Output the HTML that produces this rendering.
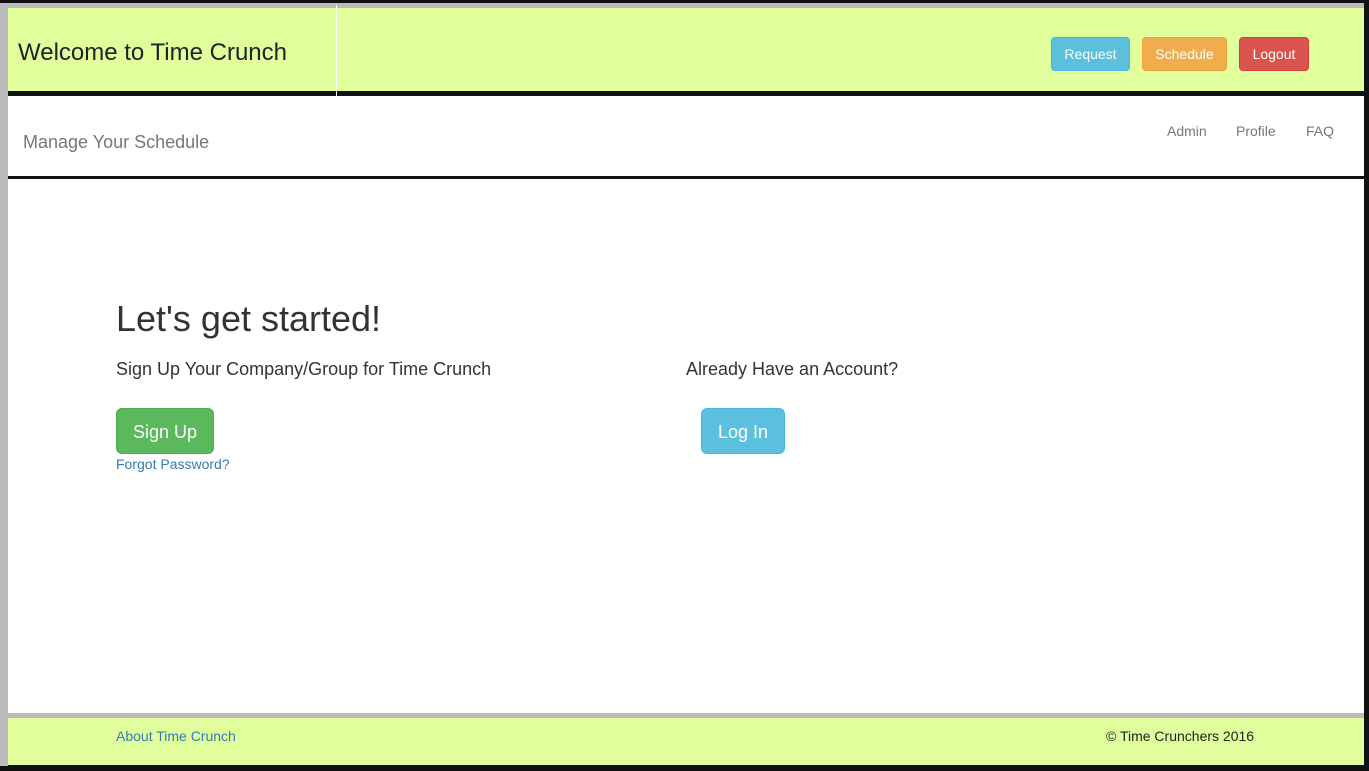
<!DOCTYPE html>
<html><head><meta charset="utf-8"><style>
*{margin:0;padding:0;box-sizing:border-box}
body{width:1369px;height:771px;background:#111;position:relative;overflow:hidden;font-family:"Liberation Sans",Arial,sans-serif}
.a{position:absolute}
.btn{position:absolute;border-radius:4px;color:#fff;font-size:14px;text-align:center;border:1px solid}
</style></head><body>
<div class="a" style="left:0;top:3px;width:1364px;height:5px;background:#bbb"></div>
<div class="a" style="left:0;top:3px;width:8px;height:763px;background:#bbb"></div>
<div class="a" style="left:8px;top:8px;width:1356px;height:83px;background:#e0ff9c"></div>
<div class="a" style="left:8px;top:91px;width:1356px;height:5px;background:#111"></div>
<div class="a" style="left:336px;top:5px;width:1px;height:91px;background:#fff"></div>
<div class="a" style="left:18px;top:39px;font-size:24px;color:#222">Welcome to Time Crunch</div>
<div class="btn" style="left:1051px;top:37px;width:79px;height:34px;line-height:32px;background:#5bc0de;border-color:#46b8da">Request</div>
<div class="btn" style="left:1142px;top:37px;width:85px;height:34px;line-height:32px;background:#f0ad4e;border-color:#eea236">Schedule</div>
<div class="btn" style="left:1239px;top:37px;width:70px;height:34px;line-height:32px;background:#d9534f;border-color:#d43f3a">Logout</div>
<div class="a" style="left:8px;top:96px;width:1356px;height:80px;background:#fff"></div>
<div class="a" style="left:23px;top:132px;font-size:18px;color:#777">Manage Your Schedule</div>
<div class="a" style="left:1167px;top:123px;font-size:14px;color:#777">Admin</div>
<div class="a" style="left:1236px;top:123px;font-size:14px;color:#777">Profile</div>
<div class="a" style="left:1306px;top:123px;font-size:14px;color:#777">FAQ</div>
<div class="a" style="left:8px;top:176px;width:1356px;height:3px;background:#111"></div>
<div class="a" style="left:8px;top:179px;width:1356px;height:534px;background:#fff"></div>
<div class="a" style="left:116px;top:298px;font-size:36px;color:#333">Let's get started!</div>
<div class="a" style="left:116px;top:359px;font-size:18px;color:#333">Sign Up Your Company/Group for Time Crunch</div>
<div class="a" style="left:686px;top:359px;font-size:18px;color:#333">Already Have an Account?</div>
<div class="btn" style="left:116px;top:408px;width:98px;height:46px;line-height:46px;font-size:18px;border-radius:6px;background:#5cb85c;border-color:#4cae4c">Sign Up</div>
<div class="btn" style="left:701px;top:408px;width:84px;height:46px;line-height:46px;font-size:18px;border-radius:6px;background:#5bc0de;border-color:#46b8da">Log In</div>
<div class="a" style="left:116px;top:456px;font-size:14px;color:#337ab7">Forgot Password?</div>
<div class="a" style="left:8px;top:713px;width:1356px;height:5px;background:#bbb"></div>
<div class="a" style="left:8px;top:718px;width:1356px;height:47px;background:#e0ff9c"></div>
<div class="a" style="left:116px;top:728px;font-size:14px;color:#337ab7">About Time Crunch</div>
<div class="a" style="left:1106px;top:728px;font-size:14px;color:#222">© Time Crunchers 2016</div>
</body></html>
